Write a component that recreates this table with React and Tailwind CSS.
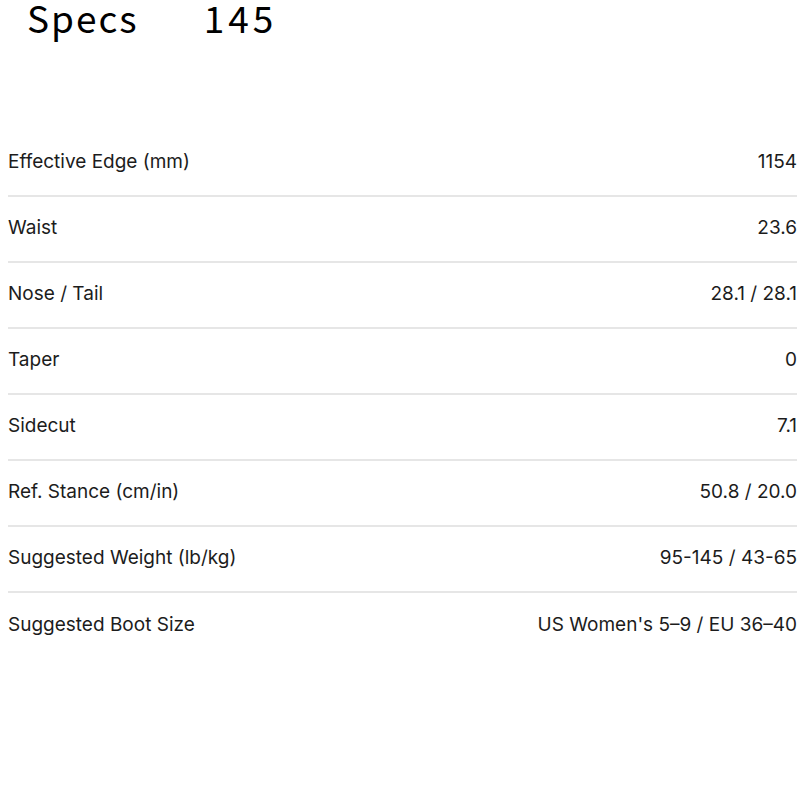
const specs = [
  ["Effective Edge (mm)", "1154"],
  ["Waist", "23.6"],
  ["Nose / Tail", "28.1 / 28.1"],
  ["Taper", "0"],
  ["Sidecut", "7.1"],
  ["Ref. Stance (cm/in)", "50.8 / 20.0"],
  ["Suggested Weight (lb/kg)", "95-145 / 43-65"],
  ["Suggested Boot Size", "US Women's 5–9 / EU 36–40"],
];

export default function App() {
  return (
    <div className="w-[800px] h-[800px] bg-white">
      <h2 className="flex pl-[27px] text-[37px] leading-[34px] text-black font-['Noto_Sans_CJK_JP',sans-serif]">
        <span className="tracking-[2px]">Specs</span>
        <span className="ml-[65px] tracking-[4px]">145</span>
      </h2>
      <div className="mt-[97px] pl-2 pr-[3px] font-['Inter',sans-serif] text-[19px] text-[#1c1c1c]">
        {specs.map(([label, value], i) => (
          <div
            key={label}
            className={`flex justify-between items-center h-[66px] pb-[1px] ${
              i < specs.length - 1 ? "border-b-2 border-[#e6e6e6]" : ""
            }`}
          >
            <span>{label}</span>
            <span>{value}</span>
          </div>
        ))}
      </div>
    </div>
  );
}
